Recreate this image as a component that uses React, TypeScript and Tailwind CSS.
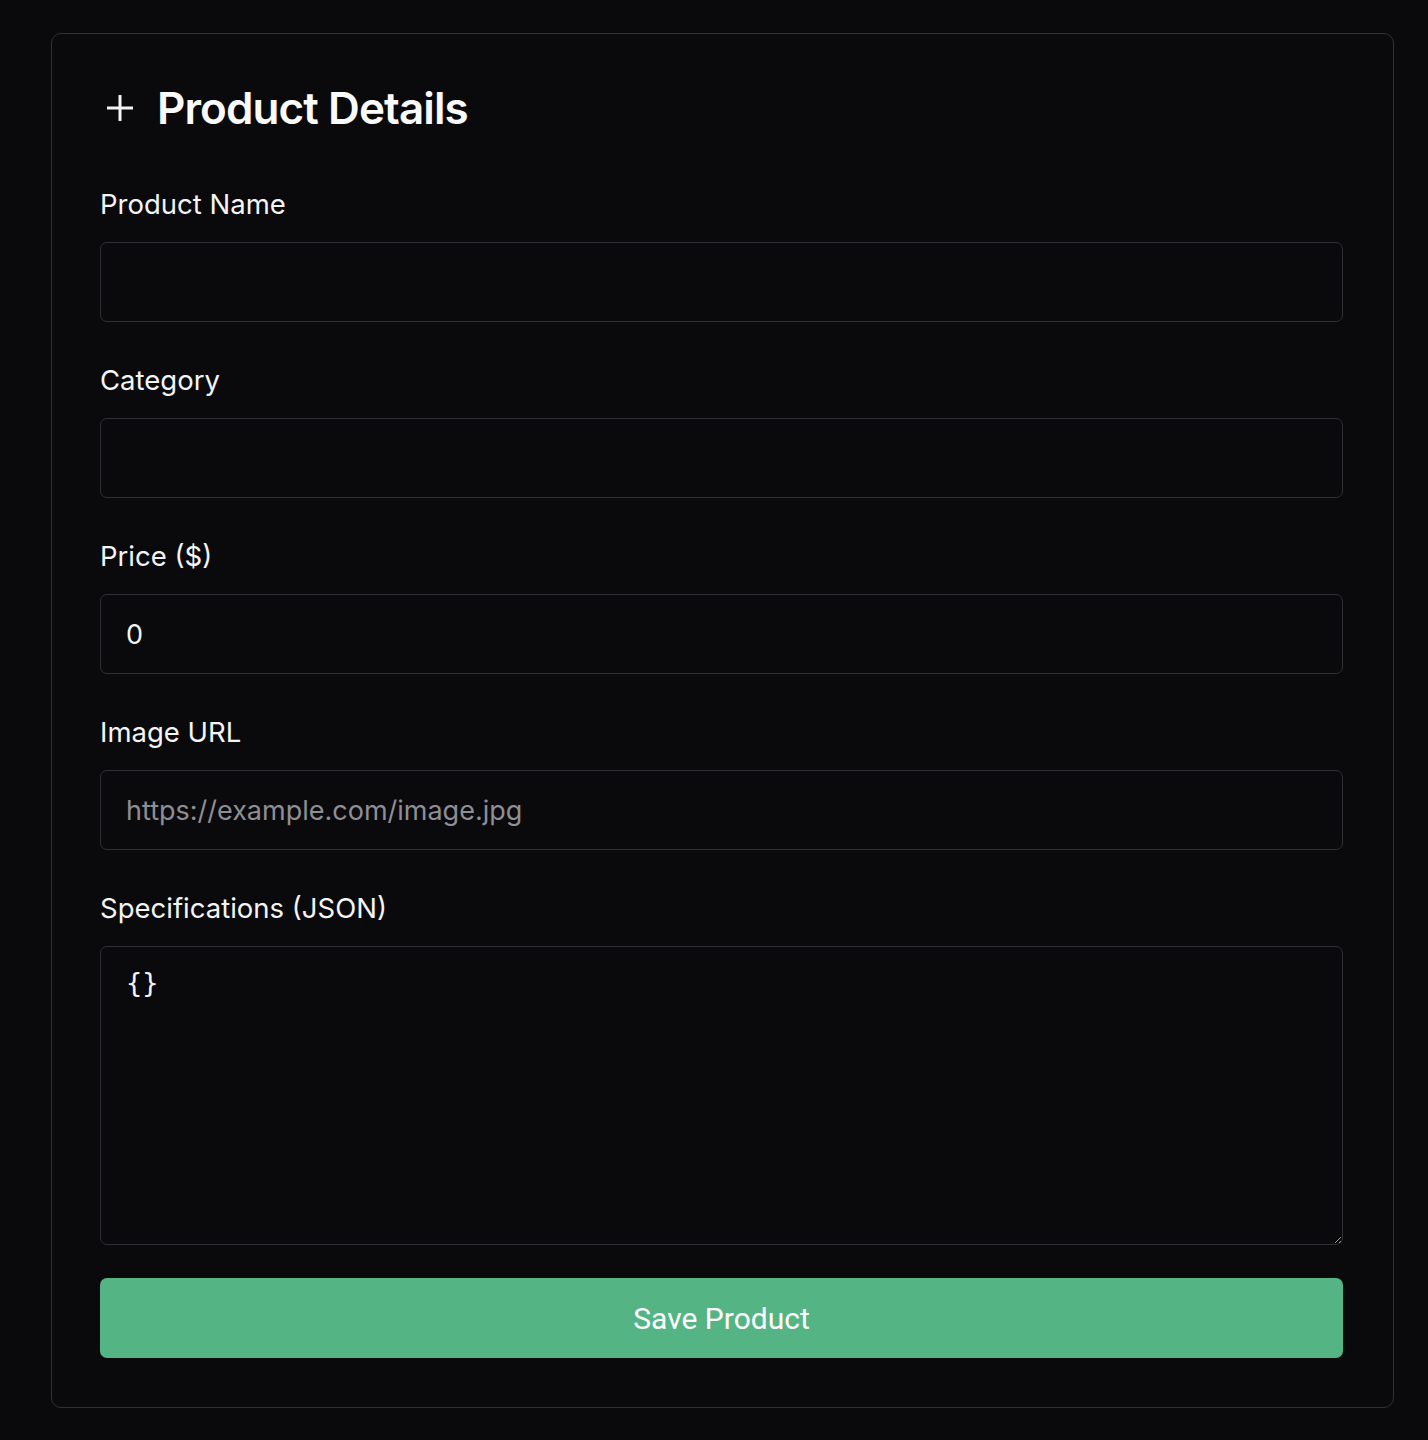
import React from "react";

function Field({ label, children }: { label: string; children: React.ReactNode }) {
  return (
    <div className="flex flex-col">
      <label className="text-[27.5px] leading-[36px] font-normal text-[#f4f4f5]">{label}</label>
      <div className="mt-[20px]">{children}</div>
    </div>
  );
}

const inputCls =
  "w-full h-[80px] rounded-[7px] border border-[#303034] bg-[#0a0a0c] px-[25px] text-[27px] text-[#f4f4f5] placeholder:text-[#8e8e94] outline-none";

export default function App() {
  return (
    <div
      className="min-h-screen bg-[#0a0a0c] pt-[33px] pl-[51px]"
      style={{ fontFamily: "Inter, 'Noto Sans', sans-serif" }}
    >
      <div className="w-[1343px] rounded-[10px] border border-[#313135] bg-[#0a0a0c] pl-[48px] pr-[50px] pt-[48px] pb-[49px]">
        <div className="flex items-center h-[52px]">
          <svg width="32" height="32" viewBox="0 0 32 32" className="ml-[4px]">
            <path d="M16 3 V29 M3 16 H29" stroke="#f4f4f5" strokeWidth="3" fill="none" />
          </svg>
          <h1 className="ml-[21px] text-[44px] leading-[52px] font-semibold tracking-[-0.9px] text-[#fafafa]">
            Product Details
          </h1>
        </div>
        <div className="mt-[52px] flex flex-col gap-[40px]">
          <Field label="Product Name">
            <input className={inputCls} type="text" />
          </Field>
          <Field label="Category">
            <input className={inputCls} type="text" />
          </Field>
          <Field label="Price ($)">
            <input className={inputCls} type="text" defaultValue="0" />
          </Field>
          <Field label="Image URL">
            <input className={inputCls} type="text" placeholder="https://example.com/image.jpg" />
          </Field>
          <Field label="Specifications (JSON)">
            <textarea
              className="block w-full h-[299px] rounded-[7px] border border-[#303034] bg-[#0a0a0c] px-[25px] py-[18px] text-[27px] leading-[36px] text-[#f4f4f5] outline-none resize-y"
              style={{ fontFamily: "'DejaVu Sans Mono', 'Liberation Mono', monospace" }}
              defaultValue="{}"
            />
          </Field>
        </div>
        <button
          className="mt-[33px] w-full h-[80px] rounded-[7px] bg-[#54b484] text-[30px] font-normal text-white"
          style={{ fontFamily: "Roboto, 'Liberation Sans', sans-serif" }}
        >
          Save Product
        </button>
      </div>
    </div>
  );
}
